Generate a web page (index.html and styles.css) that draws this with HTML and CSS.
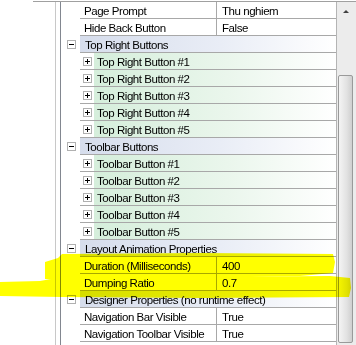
FILE: index.html
```html
<!DOCTYPE html>
<html lang="en">
<head>
  <meta charset="UTF-8" />
  <title>Property grid</title>
  <link rel="stylesheet" href="styles.css">
</head>
<body>
  <div class="topline"></div>
  <div class="frame">
    <div class="blank"></div>
    <div class="splitter"></div>
    <div class="grid">
      <div class="rows">
        <div class="row prop"><div class="gutter"></div><div class="cells"><div class="name">Page Prompt</div><div class="value">Thu nghiem</div></div></div>
        <div class="row prop"><div class="gutter"></div><div class="cells"><div class="name">Hide Back Button</div><div class="value">False</div></div></div>

        <div class="row cat"><div class="gutter"><span class="box minus"></span></div><div class="cells">Top Right Buttons</div></div>
        <div class="row sub"><div class="gutter"></div><div class="cells"><span class="box plus"></span><div class="label">Top Right Button #1</div></div></div>
        <div class="row sub"><div class="gutter"></div><div class="cells"><span class="box plus"></span><div class="label">Top Right Button #2</div></div></div>
        <div class="row sub"><div class="gutter"></div><div class="cells"><span class="box plus"></span><div class="label">Top Right Button #3</div></div></div>
        <div class="row sub"><div class="gutter"></div><div class="cells"><span class="box plus"></span><div class="label">Top Right Button #4</div></div></div>
        <div class="row sub"><div class="gutter"></div><div class="cells"><span class="box plus"></span><div class="label">Top Right Button #5</div></div></div>

        <div class="row cat"><div class="gutter"><span class="box minus"></span></div><div class="cells">Toolbar Buttons</div></div>
        <div class="row sub"><div class="gutter"></div><div class="cells"><span class="box plus"></span><div class="label">Toolbar Button #1</div></div></div>
        <div class="row sub"><div class="gutter"></div><div class="cells"><span class="box plus"></span><div class="label">Toolbar Button #2</div></div></div>
        <div class="row sub"><div class="gutter"></div><div class="cells"><span class="box plus"></span><div class="label">Toolbar Button #3</div></div></div>
        <div class="row sub"><div class="gutter"></div><div class="cells"><span class="box plus"></span><div class="label">Toolbar Button #4</div></div></div>
        <div class="row sub"><div class="gutter"></div><div class="cells"><span class="box plus"></span><div class="label">Toolbar Button #5</div></div></div>

        <div class="row cat"><div class="gutter"><span class="box minus"></span></div><div class="cells">Layout Animation Properties</div></div>
        <div class="row prop"><div class="gutter"></div><div class="cells"><div class="name">Duration (Milliseconds)</div><div class="value">400</div></div></div>
        <div class="row prop"><div class="gutter"></div><div class="cells"><div class="name">Dumping Ratio</div><div class="value">0.7</div></div></div>

        <div class="row cat"><div class="gutter"><span class="box minus"></span></div><div class="cells">Designer Properties (no runtime effect)</div></div>
        <div class="row prop"><div class="gutter"></div><div class="cells"><div class="name">Navigation Bar Visible</div><div class="value">True</div></div></div>
        <div class="row prop"><div class="gutter"></div><div class="cells"><div class="name">Navigation Toolbar Visible</div><div class="value">True</div></div></div>
      </div>
      <div class="scrollbar">
        <div class="arrow"><span class="tri"></span></div>
        <div class="track"><div class="thumb"></div></div>
      </div>
    </div>
  </div>

  <!-- marker strokes drawn over the screenshot -->
  <svg class="marker" width="356" height="345" viewBox="0 0 356 345">
    <polygon points="45,262 58,258 62,254 200,253 333,254 335,262 333,273 300,276 200,278 62,280 45,279" />
    <polygon points="0,282 40,281 62,277 200,277 330,276 350,278 351,288 349,297 200,298 62,297 0,296" />
  </svg>
</body>
</html>
```

FILE: styles.css
```css
body {
  margin: 0;
  background: #fff;
  color: #000;
  font-family: "Liberation Sans", Arial, sans-serif;
  font-size: 11.5px;
  letter-spacing: -0.45px;
  width: 356px;
  height: 345px;
  overflow: hidden;
  position: relative;
}

.topline {
  margin: 1px 0 0 33px;
  height: 1px;
  background: #a0a0a0;
}

.frame {
  display: flex;
  height: 343px;
}

.blank {
  width: 55px;
}

.splitter {
  width: 1px;
  margin-right: 4px;
  background: #c8c8c8;
}

.grid {
  display: flex;
  border-left: 1px solid #828790;
}

.rows {
  width: 275px;
  border-right: 1px solid #b4b4b4;
}

.row {
  display: flex;
  height: 17px;
}

.gutter {
  width: 19px;
  flex: none;
  display: flex;
  align-items: center;
}

.cells {
  flex: 1;
  display: flex;
  align-items: center;
  border-bottom: 1px solid #a8a8a8;
  line-height: 16px;
  padding-top: 1px;
  height: 15px;
  white-space: nowrap;
  overflow: hidden;
}

.prop .name {
  width: 132px;
  padding-left: 4px;
  overflow: hidden;
}

.prop .value {
  flex: 1;
  height: 17px;
  margin-top: -1px;
  line-height: 18px;
  border-left: 1px solid #a8a8a8;
  padding-left: 5px;
}

.cat .cells {
  padding-left: 5px;
  background: linear-gradient(to right, #d6ddec, #e9edf6 55%, #fff);
}

.sub .label {
  flex: 1;
  height: 17px;
  margin-top: -1px;
  line-height: 18px;
  margin-left: 2px;
  padding-left: 3px;
  background: linear-gradient(to right, #d5eedb, #eaf6ec 55%, #fff);
}

/* expand / collapse boxes */
.box {
  position: relative;
  width: 7px;
  height: 7px;
  border: 1px solid #b0b0b0;
  background: #fff;
  flex: none;
}

.minus {
  margin-left: 6px;
}

.plus {
  margin-left: 3px;
  margin-top: -1px;
}

.box::before {
  content: "";
  position: absolute;
  left: 1px;
  top: 3px;
  width: 5px;
  height: 1px;
  background: #000;
}

.plus::after {
  content: "";
  position: absolute;
  left: 3px;
  top: 1px;
  width: 1px;
  height: 5px;
  background: #000;
}

/* scrollbar */
.scrollbar {
  width: 19px;
  display: flex;
  flex-direction: column;
  background: #ececec;
}

.arrow {
  height: 18px;
  display: flex;
  justify-content: center;
  align-items: center;
}

.tri {
  width: 0;
  height: 0;
  border-left: 3px solid transparent;
  border-right: 3px solid transparent;
  border-bottom: 3px solid #404040;
  margin-right: 2px;
}

.track {
  flex: 1;
  padding: 55px 3px 0 1px;
}

.thumb {
  height: 266px;
  border: 1px solid #9a9a9a;
  border-radius: 2px;
  background: linear-gradient(to right, #f4f4f4, #e2e2e2 60%, #cfcfcf);
}

.marker {
  position: absolute;
  top: 0;
  left: 0;
  pointer-events: none;
  mix-blend-mode: multiply;
}

.marker polygon {
  fill: #ffff00;
}
```
